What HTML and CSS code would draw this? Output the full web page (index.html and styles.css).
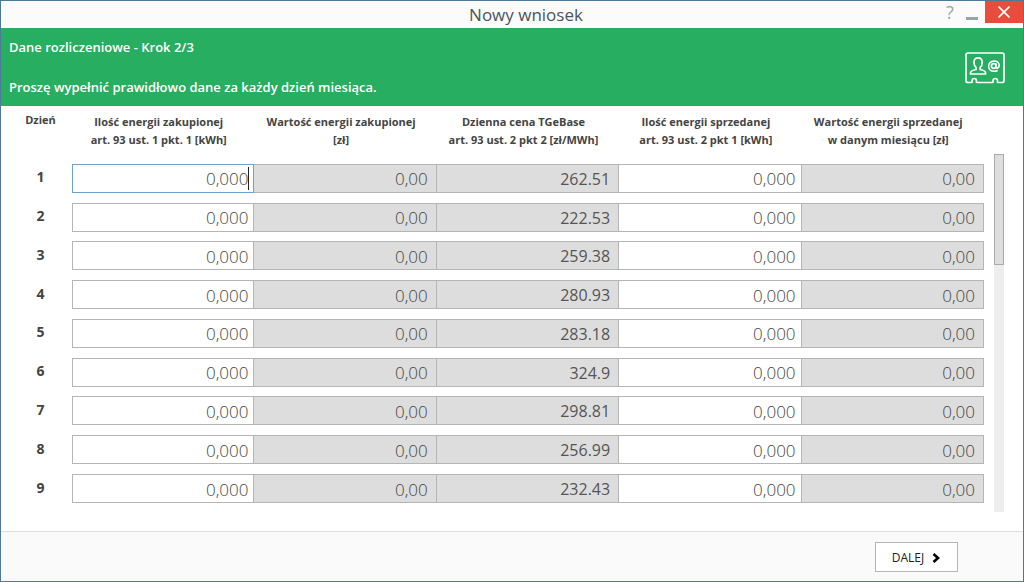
FILE: index.html
```html
<!DOCTYPE html>
<html lang="pl">
<head>
<meta charset="utf-8">
<title>Nowy wniosek</title>
<link rel="stylesheet" href="styles.css">
</head>
<body>
<div class="window">
  <header class="titlebar">
    <h1 class="title">Nowy wniosek</h1>
    <div class="controls">
      <button class="control" type="button" aria-label="Pomoc">?</button>
      <button class="control minimize" type="button" aria-label="Minimalizuj"><svg width="12" height="3" viewBox="0 0 12 3"><path d="M0 0h12v3H0z" fill="#95a5a6"/></svg></button>
      <button class="control close" type="button" aria-label="Zamknij"><svg width="12" height="12" viewBox="0 0 12 12"><path d="M.5.5l11 11M11.5.5l-11 11" stroke="#fff" stroke-width="1.6"/></svg></button>
    </div>
  </header>
  <section class="banner">
    <div class="banner-text">
      <h2>Dane rozliczeniowe - Krok 2/3</h2>
      <p>Proszę wypełnić prawidłowo dane za każdy dzień miesiąca.</p>
    </div>
    <svg class="banner-icon" width="40" height="32" viewBox="0 0 40 32" fill="none" stroke="#fff" stroke-width="1.7">
      <path d="M7 30.500H3Q1 30.500 1 28.500V3Q1 1 3 1H37Q39 1 39 3V28.500Q39 30.500 37 30.500H32.500M28 30.500H11.500"/>
      <path d="M7 31V29A2.250 2.500 0 0 1 11.500 29V31M28 31V29A2.250 2.500 0 0 1 32.500 29V31"/>
      <path d="M5.500 22V20.500Q6 18.500 11 17.500V15.500Q9 13.500 9 10.500Q9 5.800 13 5.800Q17.200 5.800 17.200 10.500Q17.200 13.500 15.200 15.500V17.500Q20 18.500 20.500 20.500V22Z"/>
      <circle cx="28.700" cy="14" r="2.300"/>
      <path d="M31.200 11.500L30.700 15.300Q30.700 16.500 32 16.300Q34.200 15.800 34.200 13.200Q33.700 8.900 29.200 8.900Q23.800 9.200 23.600 14.200Q24 19.200 28.900 19.300Q31 19.300 32.600 18.500" stroke-width="1.500"/>
    </svg>
  </section>
  <main class="content">
    <table class="days">
      <thead>
        <tr>
          <th class="day-head" scope="col">Dzień</th>
          <th scope="col">Ilość energii zakupionej<br>art. 93 ust. 1 pkt. 1 [kWh]</th>
          <th scope="col">Wartość energii zakupionej<br>[zł]</th>
          <th scope="col">Dzienna cena TGeBase<br>art. 93 ust. 2 pkt 2 [zł/MWh]</th>
          <th scope="col">Ilość energii sprzedanej<br>art. 93 ust. 2 pkt 1 [kWh]</th>
          <th scope="col">Wartość energii sprzedanej<br>w danym miesiącu [zł]</th>
        </tr>
      </thead>
      <tbody id="rows"></tbody>
    </table>
    <div class="scrollbar"><div class="thumb"></div></div>
  </main>
  <footer class="footer">
    <button class="next" type="button">DALEJ <svg width="9" height="10" viewBox="0 0 9 10"><path d="M1.500 1L6 5L1.500 9" fill="none" stroke="#000" stroke-width="2.600"/></svg></button>
  </footer>
</div>
<script src="rows.js"></script>
</body>
</html>
```
FILE: rows.js
```js
const prices = ["262.51", "222.53", "259.38", "280.93", "283.18", "324.9", "298.81", "256.99", "232.43"];
const editable = (label) => `<td><input class="field" type="text" value="0,000" aria-label="${label}"></td>`;
const locked = (label, value, kind) => `<td><input class="field locked ${kind}" type="text" value="${value}" readonly aria-label="${label}"></td>`;

document.getElementById("rows").innerHTML = prices.map((price, i) => {
  const day = i + 1;
  return `<tr><th class="day" scope="row">${day}</th>` +
    editable(`Ilość energii zakupionej, dzień ${day}`) +
    locked(`Wartość energii zakupionej, dzień ${day}`, "0,00", "amount") +
    locked(`Dzienna cena TGeBase, dzień ${day}`, price, "price") +
    editable(`Ilość energii sprzedanej, dzień ${day}`) +
    locked(`Wartość energii sprzedanej, dzień ${day}`, "0,00", "amount") +
    `</tr>`;
}).join("");

const first = document.querySelector(".field");
first.classList.add("active");
first.parentElement.classList.add("caret");
```
FILE: styles.css
```css
* { box-sizing: border-box; }

body {
  margin: 0;
  font-family: "Open Sans", "Noto Sans", sans-serif;
  color: #444;
}

button, input { font-family: inherit; }

.window {
  display: flex;
  flex-direction: column;
  min-height: 100vh;
  border: 1px solid #4c7a96;
  background: #fff;
}

.titlebar {
  display: grid;
  grid-template-columns: 1fr auto 1fr;
  height: 27px;
  background: #fbfbfb;
}

.title {
  grid-column: 2;
  margin: 0;
  padding-left: 28px;
  font-size: 17px;
  font-weight: 400;
  line-height: 28px;
  color: #4a5560;
}

.controls {
  display: flex;
  justify-content: flex-end;
}

.control {
  width: 22px;
  height: 22px;
  padding: 0;
  border: 0;
  background: none;
  font-size: 18px;
  line-height: 22px;
  color: #95a5a6;
}

.minimize {
  display: flex;
  align-items: flex-end;
  justify-content: center;
  padding-bottom: 3px;
}

.close {
  display: grid;
  place-items: center;
  width: 38px;
  margin-left: 2px;
  background: #e74c3c;
}

.banner {
  display: flex;
  align-items: center;
  justify-content: space-between;
  height: 78px;
  padding: 0 18px 0 8px;
  background: #27ae60;
  color: #fff;
}

.banner-icon { margin-top: 2px; }

.banner-text {
  display: grid;
  gap: 22px;
}

.banner h2, .banner p {
  margin: 0;
  font-size: 13px;
  font-weight: 600;
  line-height: 18px;
}

.content {
  display: grid;
  grid-template-columns: 1fr 10px;
  column-gap: 10px;
  flex: 1;
  padding-right: 19px;
}

.days {
  width: 100%;
  margin-bottom: 23px;
  border-collapse: collapse;
  table-layout: fixed;
}

.days th, .days td { padding: 0; }

.days thead th {
  height: 53px;
  padding: 7px 9px 0 0;
  vertical-align: top;
  font-size: 11px;
  font-weight: 700;
  line-height: 18px;
  white-space: nowrap;
}

.days thead .day-head {
  width: 71px;
  padding: 5px 0 0 8px;
}

.days .day {
  padding: 0 0 2px 8px;
  font-size: 14px;
  font-weight: 700;
  line-height: 20px;
}

.field {
  display: block;
  width: 100%;
  height: 29px;
  padding: 1px 5px 0;
  border: 1px solid #b5b5b5;
  border-left-width: 0;
  border-radius: 0;
  outline: 0;
  background: #fff;
  font-size: 17px;
  font-weight: 300;
  text-align: right;
  color: #444;
}

.day + td .field { border-left-width: 1px; }

.locked {
  padding-right: 8px;
  background: #ddd;
}

.price {
  font-size: 16px;
  font-weight: 400;
  color: #555;
}

.active { border-color: #6fa3cf; }

.caret { position: relative; }

.caret::after {
  content: "";
  position: absolute;
  top: 8px;
  right: 5px;
  width: 1px;
  height: 23px;
  background: #222;
}

.scrollbar {
  margin: 48px 0 19px;
  background: #ededed;
}

.thumb {
  height: 111px;
  border: 1px solid #aaa;
  background: #dedede;
}

.footer {
  display: flex;
  justify-content: flex-end;
  height: 50px;
  padding: 10px 65px 0 0;
  border-top: 1px solid #ddd;
  background: #fafafa;
}

.next {
  display: flex;
  align-items: center;
  justify-content: center;
  gap: 8px;
  width: 83px;
  height: 30px;
  padding: 1px 0 0;
  border: 1px solid #b5b5b5;
  background: #fff;
  font-size: 12px;
  color: #222;
}
```
